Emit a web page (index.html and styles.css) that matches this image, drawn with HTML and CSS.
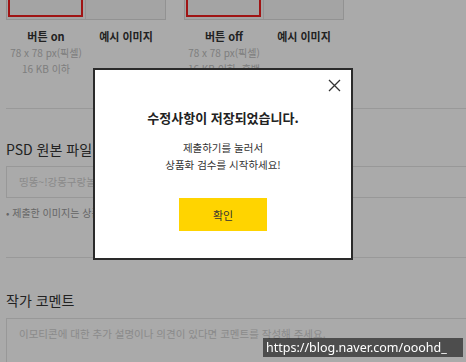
FILE: index.html
```html
<!DOCTYPE html>
<html lang="ko">
<head>
<meta charset="utf-8">
<link rel="stylesheet" href="styles.css">
</head>
<body>
<div class="page">
  <div class="thumbs">
    <div class="group">
      <div class="frame">
        <div class="cell"><div class="sel"></div></div>
        <div class="cell"></div>
      </div>
      <div class="labels">
        <div class="col">
          <div class="label">버튼 on</div>
          <div class="sub">78 x 78 px(픽셀)</div>
          <div class="sub">16 KB 이하</div>
        </div>
        <div class="col">
          <div class="label">예시 이미지</div>
        </div>
      </div>
    </div>
    <div class="group">
      <div class="frame">
        <div class="cell"><div class="sel"></div></div>
        <div class="cell"></div>
      </div>
      <div class="labels">
        <div class="col">
          <div class="label">버튼 off</div>
          <div class="sub">78 x 78 px(픽셀)</div>
          <div class="sub">16 KB 이하, 흑백</div>
        </div>
        <div class="col">
          <div class="label">예시 이미지</div>
        </div>
      </div>
    </div>
  </div>

  <section class="sec psd">
    <h2 class="heading">PSD 원본 파일</h2>
    <div class="input"><span class="clip">띵똥~!강몽구랑놀자.psd</span></div>
    <p class="note">• 제출한 이미지는 상품화 검수 후 수정할 수 없습니다.</p>
  </section>

  <section class="sec comment">
    <h2 class="heading">작가 코멘트</h2>
    <div class="textarea">이모티콘에 대한 추가 설명이나 의견이 있다면 코멘트를 작성해 주세요.</div>
  </section>
</div>

<div class="overlay"></div>

<div class="modal">
  <button class="close" aria-label="닫기">
    <svg width="13" height="13" viewBox="0 0 13 13"><path d="M1 1L12 12M12 1L1 12" stroke="#333" stroke-width="1.3" fill="none"/></svg>
  </button>
  <div class="title">수정사항이 저장되었습니다.</div>
  <div class="msg">제출하기를 눌러서<br>상품화 검수를 시작하세요!</div>
  <button class="ok">확인</button>
</div>

<div class="watermark">https://blog.naver.com/ooohd_</div>
</body>
</html>
```
FILE: styles.css
```css
* { box-sizing: border-box; }
html, body { margin: 0; padding: 0; }
body {
  width: 466px;
  height: 362px;
  overflow: hidden;
  background: #fff;
  font-family: "Noto Sans CJK KR", "Noto Sans", sans-serif;
  color: #333;
}
.page {
  width: 466px;
  padding-left: 6px;
}
.thumbs {
  display: flex;
  gap: 18px;
  height: 109px;
  border-bottom: 1px solid #e6e6e6;
}
.group { width: 160px; }
.frame {
  display: flex;
  height: 20px;
  border: 1px solid #dcdcdc;
  border-top: 0;
  background: #f6f6f6;
}
.cell {
  width: 80px;
  height: 19px;
  border-right: 1px solid #e2e2e2;
}
.cell:last-child { border-right: 0; }
.sel {
  height: 17px;
  margin: 0 2px 0 1px;
  border: 2px solid #f01e1e;
  border-top: 0;
}
.labels { display: flex; }
.col {
  width: 80px;
  text-align: center;
}
.label {
  margin-top: 8px;
  font-size: 11px;
  font-weight: 700;
  line-height: 17px;
  color: #333;
}
.sub {
  font-size: 10px;
  line-height: 16px;
  color: #bdbdbd;
  white-space: nowrap;
}
.sec { border-bottom: 1px solid #e6e6e6; }
.heading {
  margin: 0;
  font-size: 14px;
  font-weight: 400;
  line-height: 20px;
  color: #333;
}
.psd { height: 149px; padding-top: 30px; }
.psd .heading { margin-bottom: 7px; }
.input {
  height: 32px;
  border: 1px solid #e4e4e4;
  border-right: 0;
  padding-left: 12px;
  font-size: 10.5px;
  line-height: 30px;
  color: #d0d0d0;
}
.clip {
  display: block;
  width: 75px;
  overflow: hidden;
  white-space: nowrap;
}
.note {
  margin: 8px 0 0;
  width: 87px;
  overflow: hidden;
  white-space: nowrap;
  font-size: 10px;
  line-height: 14px;
  color: #9a9a9a;
}
.comment { padding-top: 32px; border-bottom: 0; }
.comment .heading { margin-bottom: 8px; }
.textarea {
  height: 60px;
  border: 1px solid #e4e4e4;
  border-right: 0;
  padding: 7px 0 0 12px;
  font-size: 10.5px;
  line-height: 16px;
  color: #d0d0d0;
  white-space: nowrap;
  overflow: hidden;
}
.overlay {
  position: fixed;
  inset: 0;
  background: rgba(0, 0, 0, 0.333);
}
.modal {
  position: fixed;
  left: 93px;
  top: 68px;
  width: 260px;
  height: 192px;
  background: #fff;
  border: 2px solid #2a2a2a;
  display: flex;
  flex-direction: column;
  align-items: center;
  padding-top: 39px;
}
.close {
  position: absolute;
  right: 10px;
  top: 9px;
  width: 13px;
  height: 13px;
  padding: 0;
  border: 0;
  background: none;
  display: flex;
}
.title {
  font-size: 13px;
  font-weight: 700;
  line-height: 18px;
  color: #222;
}
.msg {
  margin-top: 12px;
  font-size: 10.5px;
  line-height: 17px;
  text-align: center;
  color: #333;
}
.ok {
  margin-top: 25px;
  width: 88px;
  height: 33px;
  border: 0;
  background: #ffd400;
  font-family: inherit;
  font-size: 11px;
  color: #333;
  padding: 0;
}
.watermark {
  position: fixed;
  left: 263px;
  top: 338px;
  width: 200px;
  height: 19px;
  background: rgba(0, 0, 0, 0.55);
  color: #fff;
  font-family: "Noto Sans", sans-serif;
  font-size: 12.5px;
  line-height: 19px;
  padding-left: 3px;
  white-space: nowrap;
}
```
